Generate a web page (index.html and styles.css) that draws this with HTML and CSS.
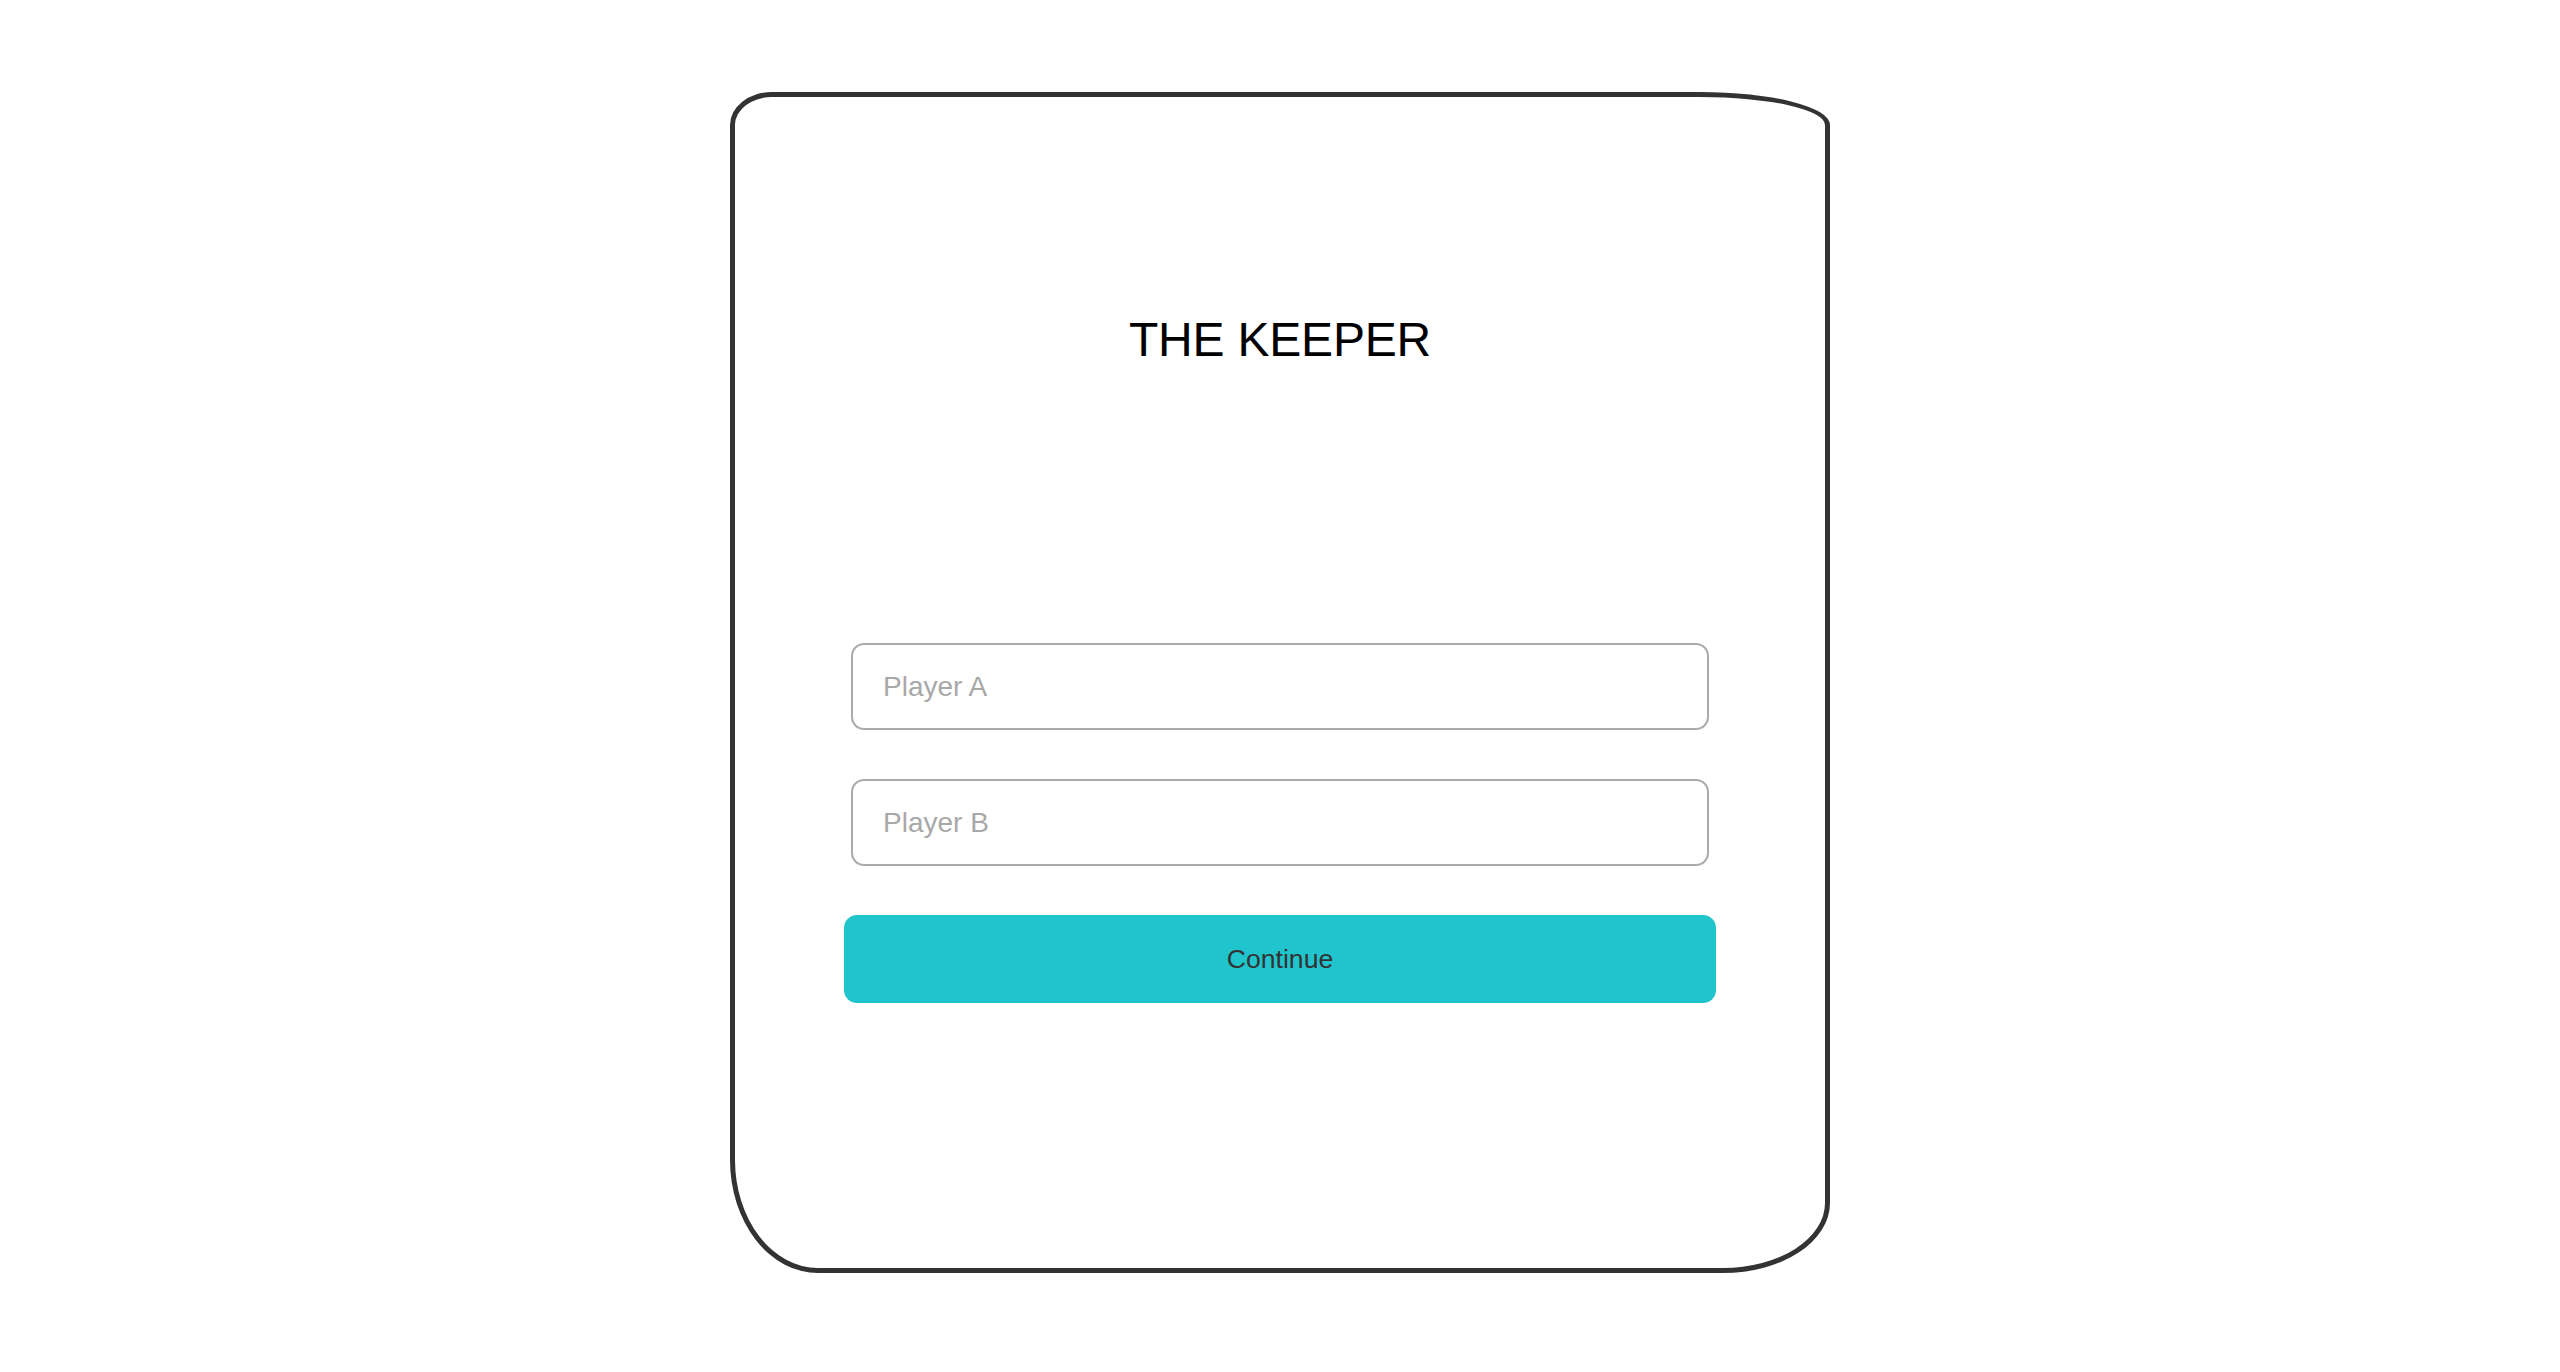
FILE: index.html
```html
<!DOCTYPE html>
<html lang="en">
<head>
<meta charset="utf-8">
<title>The Keeper</title>
<link rel="stylesheet" href="styles.css">
</head>
<body>
<main class="page">
  <section class="card">
    <h1 class="title">THE KEEPER</h1>
    <form class="form">
      <input class="field" type="text" placeholder="Player A">
      <input class="field" type="text" placeholder="Player B">
      <button class="continue" type="button">Continue</button>
    </form>
  </section>
</main>
</body>
</html>
```

FILE: styles.css
```css
html, body {
  margin: 0;
  padding: 0;
  background: #ffffff;
}

body {
  font-family: "Liberation Sans", Arial, Helvetica, sans-serif;
}

.page {
  display: flex;
  justify-content: center;
  padding-top: 92px;
}

.card {
  box-sizing: border-box;
  width: 1100px;
  height: 1181px;
  border: 5px solid #333333;
  border-radius: 42px 130px 107px 88px / 33px 33px 70px 113px;
  display: flex;
  flex-direction: column;
  align-items: center;
  padding-top: 219px;
}

.title {
  margin: 0;
  font-size: 48px;
  line-height: 48px;
  font-weight: 400;
  color: #000000;
  letter-spacing: -0.2px;
}

.form {
  margin-top: 279px;
  width: 872px;
  display: flex;
  flex-direction: column;
  align-items: center;
}

.field {
  box-sizing: border-box;
  width: 858px;
  height: 87px;
  margin: 0 0 49px;
  padding: 0 30px;
  border: 2px solid #aaaaaa;
  border-radius: 13px;
  background: #ffffff;
  font-family: "Liberation Sans", Arial, Helvetica, sans-serif;
  font-size: 28px;
  color: #333333;
  outline: none;
}

.field::placeholder {
  color: #a8a8a8;
}

.field + .field {
  margin-bottom: 49px;
}

.continue {
  box-sizing: border-box;
  width: 872px;
  height: 88px;
  border: none;
  border-radius: 13px;
  background: #20c4cc;
  color: #333333;
  font-family: "Liberation Sans", Arial, Helvetica, sans-serif;
  font-size: 26.67px;
  cursor: pointer;
}
```
